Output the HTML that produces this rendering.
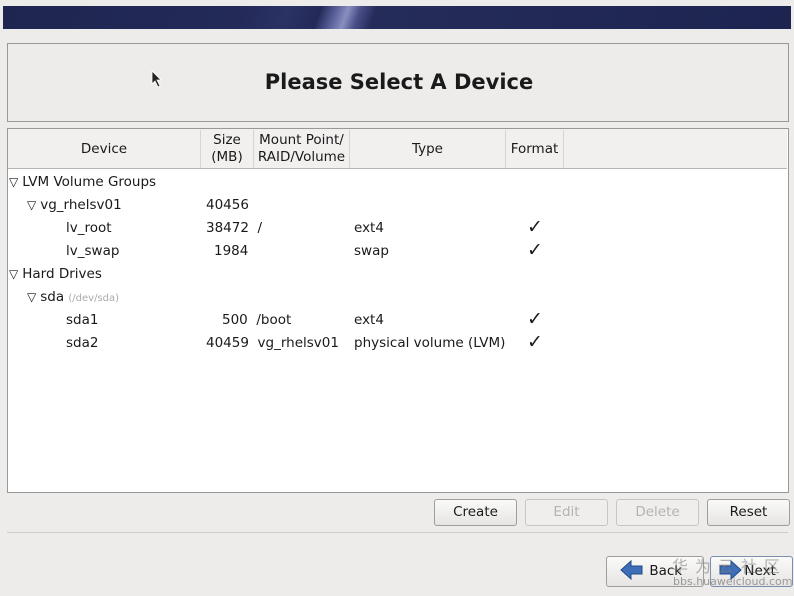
<!DOCTYPE html>
<html><head><style>
body{margin:0;width:794px;height:596px;background:#edeceb;font-family:"DejaVu Sans","Liberation Sans",sans-serif;font-size:13px;color:#1a1a1a;position:relative;overflow:hidden}
.a{position:absolute}
.banner{left:3px;top:6px;width:788px;height:23px;background:linear-gradient(110deg,#1e2550 0%,#232a58 30%,#2a3265 36%,#232a58 40%,#5a609a 42%,#8a8fc0 43.5%,#4a5088 45%,#252c5a 47%,#1d2450 100%)}
.box{border:1px solid #9a9896}
.t{white-space:nowrap}
.btn{border:1px solid #a09e9b;border-radius:3px;background:linear-gradient(#fafaf9,#e6e5e3);text-align:center;line-height:25px;font-size:13.5px}
.dis{color:#b5b3b0;border-color:#c8c6c3;background:#efeeec}
.hd{top:130px;height:38px;border-right:1px solid #d6d4d1;text-align:center;font-size:13.5px;line-height:17px;display:flex;align-items:center;justify-content:center}
.tri{font-size:12px;margin-right:4px}
.ck{font-size:19px}
.r{font-size:13.5px}
</style></head><body>
<div class="a banner"></div>
<div class="a box" style="left:7px;top:43px;width:780px;height:77px"></div>
<div class="a t" style="left:0;width:798px;top:70px;text-align:center;font-weight:bold;font-size:21px">Please Select A Device</div>
<svg class="a" style="left:151px;top:70px" width="12" height="18"><path d="M1 1 L1 14 L4 11 L7 17 L9 16 L6 10 L10 10 Z" fill="#222" stroke="#fff" stroke-width="0.8"/></svg>
<div class="a box" style="left:7px;top:128px;width:780px;height:363px;background:#fff"></div>
<div class="a" style="left:8px;top:129px;width:779px;height:39px;background:#f1f0ef;border-bottom:1px solid #b8b6b3"></div>
<div class="a hd" style="left:8px;width:192px">Device</div>
<div class="a hd" style="left:201px;width:52px">Size<br>(MB)</div>
<div class="a hd" style="left:254px;width:95px">Mount Point/<br>RAID/Volume</div>
<div class="a hd" style="left:350px;width:155px">Type</div>
<div class="a hd" style="left:506px;width:57px">Format</div>
<div class="a t r" style="left:9px;top:174px"><span class="tri">▽</span>LVM Volume Groups</div>
<div class="a t r" style="left:27px;top:197px"><span class="tri">▽</span>vg_rhelsv01</div>
<div class="a t r" style="left:206px;top:197px">40456</div>
<div class="a t r" style="left:66px;top:220px">lv_root</div>
<div class="a t r" style="left:206px;top:220px">38472&nbsp; /</div>
<div class="a t r" style="left:354px;top:220px">ext4</div>
<div class="a t ck" style="left:527px;top:216px">✓</div>
<div class="a t r" style="left:66px;top:243px">lv_swap</div>
<div class="a t r" style="left:214px;top:243px">1984</div>
<div class="a t r" style="left:354px;top:243px">swap</div>
<div class="a t ck" style="left:527px;top:239px">✓</div>
<div class="a t r" style="left:9px;top:266px"><span class="tri">▽</span>Hard Drives</div>
<div class="a t r" style="left:27px;top:289px"><span class="tri">▽</span>sda <span style="font-size:10px;color:#aaa">(/dev/sda)</span></div>
<div class="a t r" style="left:66px;top:312px">sda1</div>
<div class="a t r" style="left:222px;top:312px">500&nbsp; /boot</div>
<div class="a t r" style="left:354px;top:312px">ext4</div>
<div class="a t ck" style="left:527px;top:308px">✓</div>
<div class="a t r" style="left:66px;top:335px">sda2</div>
<div class="a t r" style="left:206px;top:335px">40459&nbsp; vg_rhelsv01</div>
<div class="a t r" style="left:354px;top:335px">physical volume (LVM)</div>
<div class="a t ck" style="left:527px;top:331px">✓</div>
<div class="a btn" style="left:434px;top:499px;width:81px;height:25px">Create</div>
<div class="a btn dis" style="left:525px;top:499px;width:81px;height:25px">Edit</div>
<div class="a btn dis" style="left:616px;top:499px;width:81px;height:25px">Delete</div>
<div class="a btn" style="left:707px;top:499px;width:81px;height:25px">Reset</div>
<div class="a" style="left:7px;top:532px;width:781px;height:1px;background:#cfcdca"></div>
<div class="a btn" style="left:606px;top:556px;width:96px;height:29px;line-height:29px">&nbsp;&nbsp;&nbsp;&nbsp;&nbsp;Back</div>
<div class="a btn" style="left:710px;top:556px;width:81px;height:29px;line-height:29px;border-color:#7a8fb0">&nbsp;&nbsp;&nbsp;&nbsp;Next</div>
<svg class="a" style="left:620px;top:559px" width="24" height="22"><path d="M1 11 L11 2 L11 7 L22 7 L22 15 L11 15 L11 20 Z" fill="#3d6fb8" stroke="#1f4a8a"/></svg>
<svg class="a" style="left:718px;top:559px" width="24" height="22"><path d="M23 11 L13 2 L13 7 L2 7 L2 15 L13 15 L13 20 Z" fill="#3d6fb8" stroke="#1f4a8a"/></svg>
<div class="a t" style="left:672px;top:553px;font-family:'Noto Sans CJK SC',sans-serif;font-size:16px;color:rgba(120,120,120,.55);letter-spacing:7px">华为云社区</div>
<div class="a t" style="left:673px;top:575px;font-size:11px;color:rgba(120,120,120,.7)">bbs.huaweicloud.com</div>
</body></html>
